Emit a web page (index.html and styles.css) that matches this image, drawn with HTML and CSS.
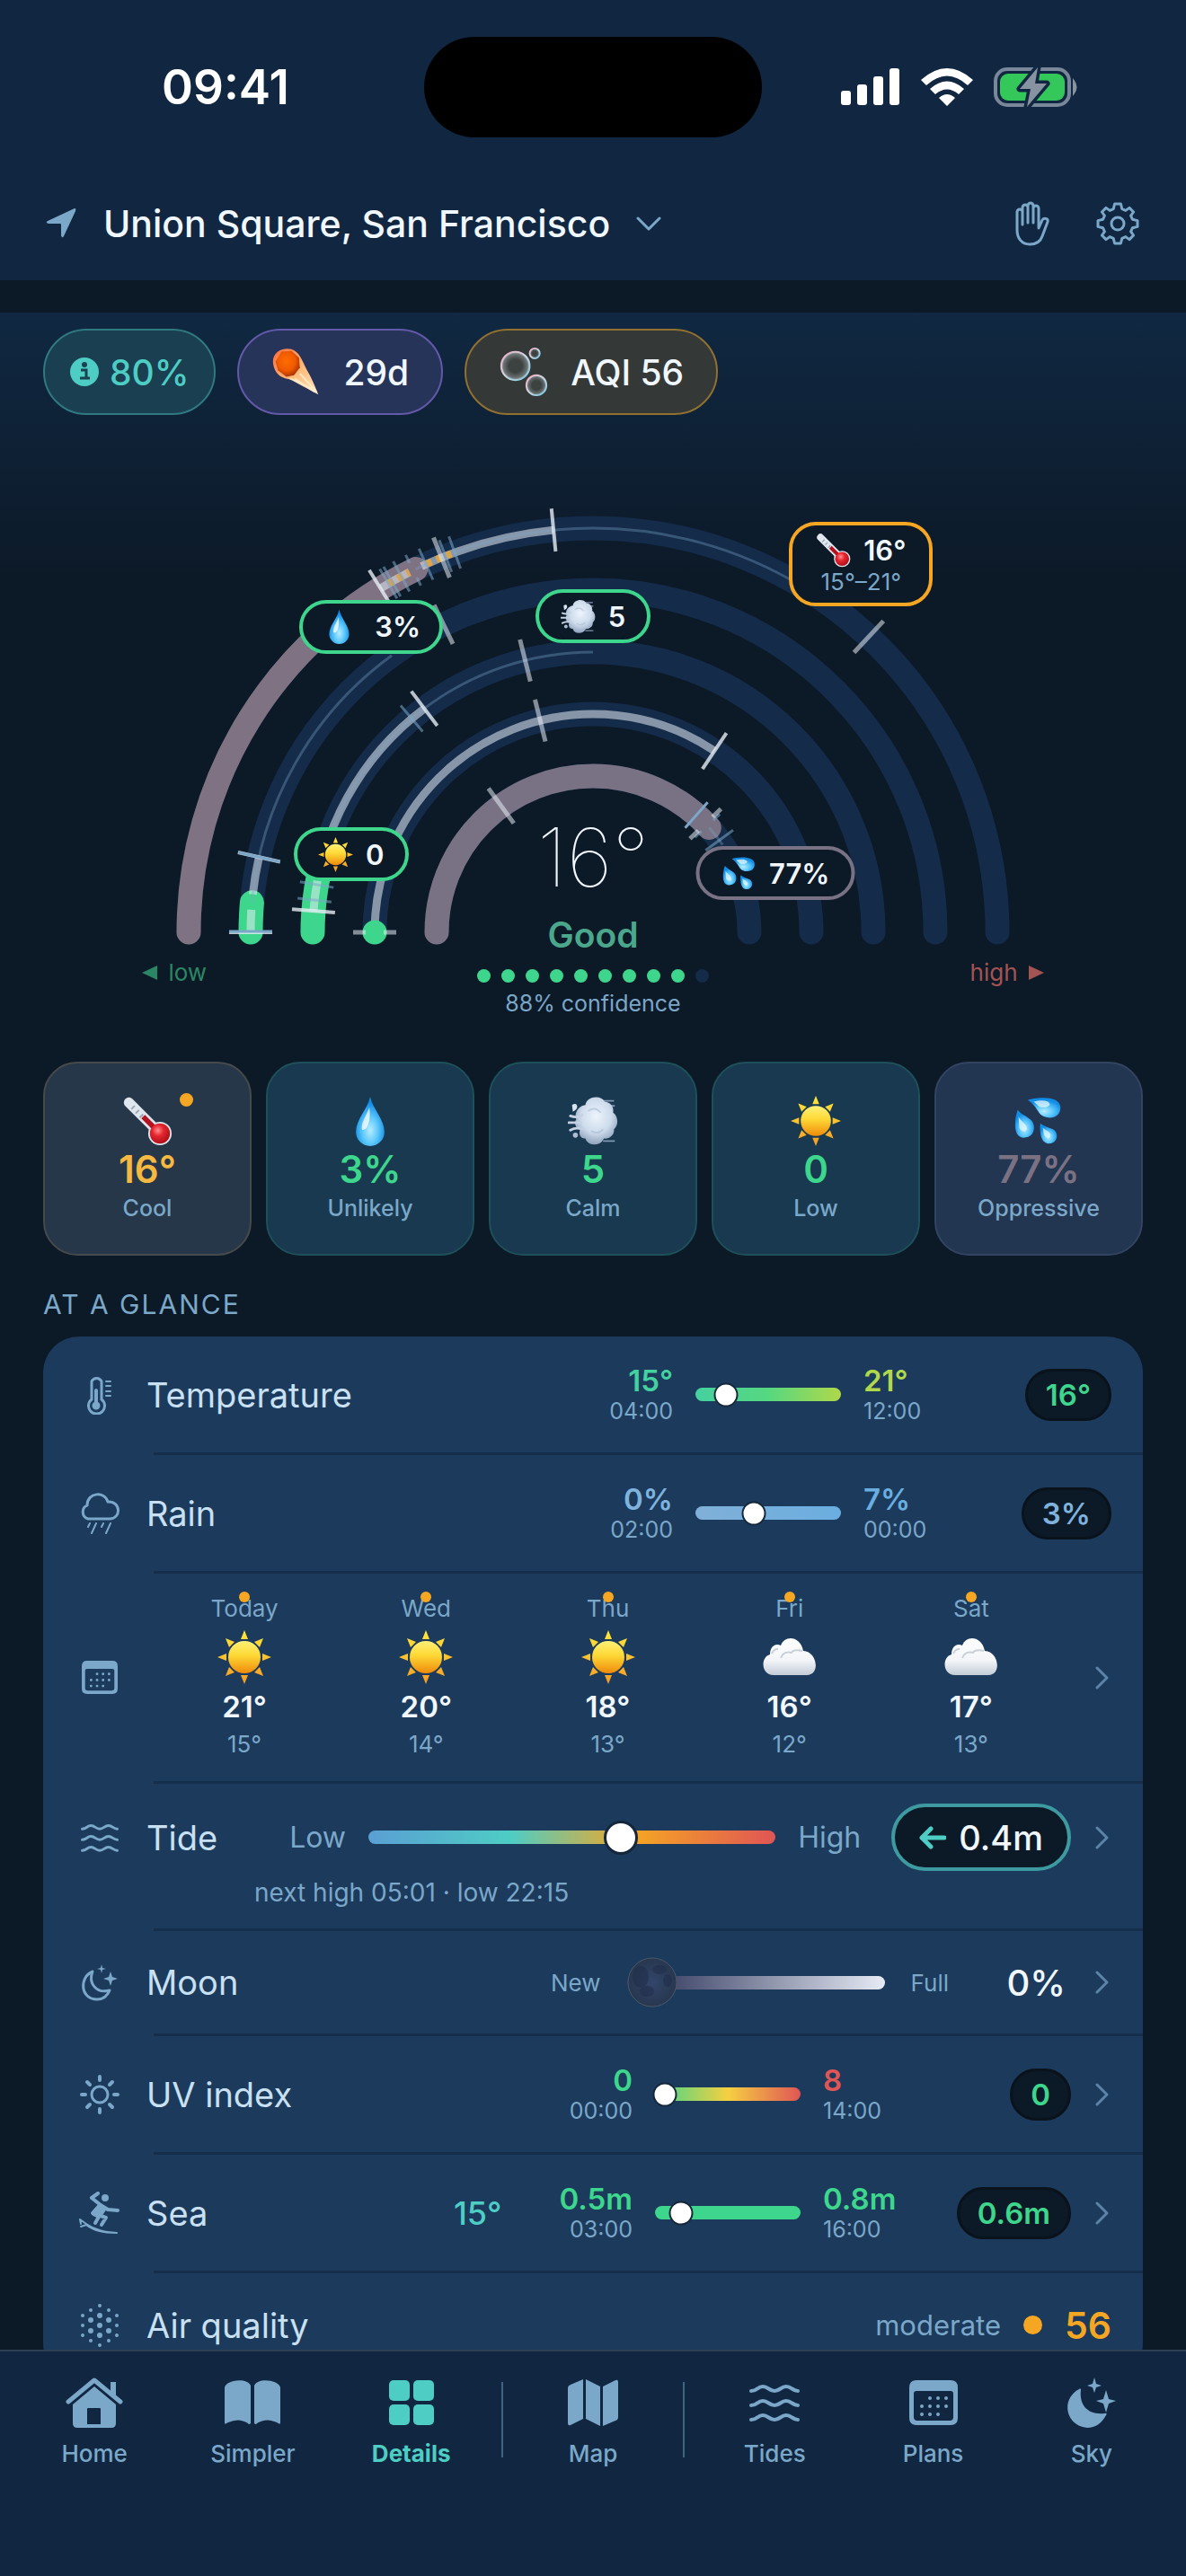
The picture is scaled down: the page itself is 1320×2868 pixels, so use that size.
FILE: index.html
```html
<!DOCTYPE html>
<html lang="en">
<head>
<meta charset="utf-8">
<meta name="viewport" content="width=device-width">
<title>Weather details</title>
<link rel="stylesheet" href="styles.css">
</head>
<body>
<svg class="defs" aria-hidden="true">
  <defs>
    <linearGradient id="g-sun" x1="0" y1="0" x2="0" y2="1"><stop offset="0" stop-color="#fff176"/><stop offset=".45" stop-color="#fdd835"/><stop offset="1" stop-color="#f08a0c"/></linearGradient>
    <linearGradient id="g-ray" gradientUnits="userSpaceOnUse" x1="0" y1="0" x2="0" y2="60"><stop offset="0" stop-color="#ffe93b"/><stop offset="1" stop-color="#f59a23"/></linearGradient>
    <radialGradient id="g-drop" cx=".5" cy=".68" r=".55"><stop offset="0" stop-color="#b8ecff"/><stop offset=".5" stop-color="#5cc8fb"/><stop offset="1" stop-color="#128de6"/></radialGradient>
    <radialGradient id="g-puff" cx=".5" cy=".4" r=".6"><stop offset="0" stop-color="#edf4fd"/><stop offset=".6" stop-color="#cddbeb"/><stop offset="1" stop-color="#8fa3bd"/></radialGradient>
    <linearGradient id="g-cloud" x1="0" y1="0" x2="0" y2="1"><stop offset="0" stop-color="#ffffff"/><stop offset=".6" stop-color="#f3f5f8"/><stop offset="1" stop-color="#c3ccd8"/></linearGradient>
    <radialGradient id="g-bulb" cx=".4" cy=".35" r=".7"><stop offset="0" stop-color="#ff8d8d"/><stop offset=".4" stop-color="#e5262f"/><stop offset="1" stop-color="#a80d18"/></radialGradient>
    <radialGradient id="g-comet" cx=".45" cy=".4" r=".6"><stop offset="0" stop-color="#ff6d00"/><stop offset=".6" stop-color="#f05a00"/><stop offset="1" stop-color="#a73208"/></radialGradient>
    <linearGradient id="g-tail" x1="0" y1="0" x2="1" y2="1"><stop offset="0" stop-color="#ff6a3a"/><stop offset=".5" stop-color="#ffb877"/><stop offset="1" stop-color="#ffe9bd"/></linearGradient>
    <radialGradient id="g-bubble"><stop offset=".45" stop-color="#9aa" stop-opacity=".08"/><stop offset=".85" stop-color="#b4bfc4" stop-opacity=".45"/><stop offset="1" stop-color="#dde6ea" stop-opacity=".9"/></radialGradient>
    <linearGradient id="g-rim" x1="0" y1="0" x2="1" y2="1"><stop offset="0" stop-color="#f7a8c4"/><stop offset=".5" stop-color="#cdd8e2"/><stop offset="1" stop-color="#6fc4e6"/></linearGradient>
    <radialGradient id="g-moon"><stop offset="0" stop-color="#33466b"/><stop offset="1" stop-color="#27374f"/></radialGradient>
  </defs>

  <symbol id="e-sun" viewBox="0 0 60 60">
    <g fill="url(#g-ray)"><path d="M30 0l4 10h-8zM30 60l4-10h-8zM0 30l10-4v8zM60 30l-10-4v8zM9 9l10 4-6 6zM51 9l-10 4 6 6zM9 51l10-4-6-6zM51 51l-10-4 6-6z"/></g>
    <circle cx="30" cy="30" r="18" fill="url(#g-sun)"/>
  </symbol>
  <symbol id="e-drop" viewBox="0 0 60 60">
    <path d="M30 1C33 16 47 28 47 43a17 17 0 0 1-34 0C13 28 27 16 30 1z" fill="url(#g-drop)"/>
    <path d="M29 14c-3 9-9 16-9 25 0 3 5 2 7-3 3-7 3-14 2-22z" fill="#fff" opacity=".75"/>
  </symbol>
  <symbol id="e-sweat" viewBox="0 0 60 60">
    <path d="M17 5c12-4 39-5 39 9 0 16-20 14-25 7C27 14 22 8 17 5z" fill="url(#g-drop)"/>
    <path d="M5 17c-4 12-6 32 7 33 15 0 15-17 8-22C14 24 8 21 5 17z" fill="url(#g-drop)"/>
    <path d="M32 33c-1 8 0 24 10 24 12 0 12-14 5-17-6-2-11-4-15-7z" fill="url(#g-drop)"/>
    <path d="M24 7c8-2 17-2 19 2s-8 6-12 4zM6 25c3 6 10 9 10 14s-8 4-9-1zM35 38c4 4 10 5 9 10s-7 2-8-3z" fill="#e3f7ff" opacity=".75"/>
  </symbol>
  <symbol id="e-wind" viewBox="0 0 60 60">
    <path d="M40 6h15M42 54h14M50 12h6" stroke="#8196b2" stroke-width="2"/>
    <path d="M21 11c1-10 18-13 23-4 8 1 11 7 10 13 6 4 7 15 1 20 1 7-6 12-12 11-4 10-20 9-22 0-8 0-8-8-6-11-6-1-8-8-5-12-3-8 3-16 11-17z" fill="url(#g-puff)"/>
    <path d="M17 23q-6 4-14 1M15 32H1M17 40q-7-3-14 1" stroke="#c3d1e2" stroke-width="3" stroke-linecap="round" fill="none"/>
    <path d="M5 11q5-3 6 1t-5 7" fill="#d8e4f2"/><circle cx="9" cy="47" r="3" fill="#aebfd4"/>
    <path d="M24 18q9-6 15 2M28 42q8 5 14-2" stroke="#9fb2cb" stroke-width="2" fill="none" opacity=".5"/>
  </symbol>
  <symbol id="e-temp" viewBox="0 0 60 60">
    <path d="M8 8L43 43" stroke="#dfe6ee" stroke-width="12" stroke-linecap="round"/>
    <circle cx="45" cy="45" r="14" fill="#dfe6ee"/>
    <path d="M25 25L44 44" stroke="#b3121e" stroke-width="6"/>
    <circle cx="45" cy="45" r="12" fill="url(#g-bulb)"/>
    <path d="M11 16l4-4M16 21l4-4M21 26l4-4" stroke="#9aa5b1" stroke-width="2"/>
  </symbol>
  <symbol id="e-cloud" viewBox="0 0 60 60">
    <path d="M12 50C-2 50-3 30 8 27c0-9 6-13 12-10C24 5 42 6 45 23c15 0 20 27 4 27z" fill="url(#g-cloud)"/>
    <path d="M20 31q3-8 12-6q2-4 12-2M10 26q2-5 7-5" stroke="#c9d0da" stroke-width="2" fill="none"/>
  </symbol>
  <symbol id="e-comet" viewBox="0 0 60 60">
    <path d="M3 24C-2 8 12 0 24 3c10 4 12 12 18 24 6 10 10 20 14 30C44 50 32 45 24 39 13 38 6 34 3 24z" fill="url(#g-tail)"/>
    <path d="M28 38l24 16M34 32l20 22M22 38l26 12" stroke="#fff3d6" stroke-width="2" opacity=".8"/>
    <path d="M12 6l12-1 9 8 1 12-7 9-9 2-10-8-3-10z" fill="url(#g-comet)"/>
  </symbol>
  <symbol id="e-bubbles" viewBox="0 0 60 60">
    <g fill="url(#g-bubble)" stroke="url(#g-rim)" stroke-width="2"><circle cx="20" cy="23" r="17"/><circle cx="45" cy="46" r="12"/><circle cx="43" cy="8" r="6"/></g>
  </symbol>

  <symbol id="i-waves" viewBox="0 0 56 42"><g fill="none" stroke="currentColor" stroke-width="4" stroke-linecap="round"><path d="M2 8c7 0 7-5 13-5s7 5 13 5 7-5 13-5 7 5 13 5"/><path d="M2 24c7 0 7-5 13-5s7 5 13 5 7-5 13-5 7 5 13 5"/><path d="M2 40c7 0 7-5 13-5s7 5 13 5 7-5 13-5 7 5 13 5"/></g></symbol>
  <symbol id="i-cal" viewBox="0 0 54 50">
    <path fill-rule="evenodd" fill="currentColor" d="M8 0h38q8 0 8 8v34q0 8-8 8H8q-8 0-8-8V8q0-8 8-8zM8 12q-3 0-3 3v26q0 4 4 4h36q4 0 4-4V15q0-3-3-3z"/>
    <path stroke="currentColor" stroke-width="4" stroke-linecap="round" stroke-dasharray="0 9" d="M23 20h20M14 29h30M14 38h20"/>
  </symbol>
  <symbol id="i-chev" viewBox="0 0 16 28"><path d="M2 3l11 11L2 25" fill="none" stroke="currentColor" stroke-width="3" stroke-linecap="round" stroke-linejoin="round"/></symbol>
</svg>

<header class="top">
  <div class="status">
    <span class="time">09:41</span>
    <span class="island"></span>
    <span class="signals">
      <svg width="66" height="42" viewBox="0 0 66 42" fill="#fff"><rect y="25" width="11" height="16" rx="3"/><rect x="18" y="18" width="11" height="23" rx="3"/><rect x="36" y="9" width="11" height="32" rx="3"/><rect x="54" width="11" height="41" rx="3"/></svg>
      <svg width="58" height="42" viewBox="0 0 58 42" fill="#fff"><path d="M0 13Q29-13 58 13L52 19Q29-2 6 19zM10 23Q29 6 48 23L42 29Q29 18 16 29zM20 33Q29 25 38 33L29 42z"/></svg>
      <svg width="94" height="46" viewBox="0 0 94 46"><rect x="2" y="3" width="82" height="40" rx="13" fill="none" stroke="#78879a" stroke-width="4"/><rect x="7" y="8" width="72" height="30" rx="9" fill="#34c759"/><path d="M89 16q5 7 0 14z" fill="#8893a1" stroke="#8893a1" stroke-width="2"/><path d="M49 1L29 25h12L37 45 59 19H46z" fill="#8893a1" stroke="#112741" stroke-width="7" paint-order="stroke" stroke-linejoin="round"/></svg>
    </span>
  </div>
  <div class="locbar">
    <button class="place" type="button">
      <svg width="36" height="36" viewBox="0 0 36 36" fill="#7ba7c8"><path d="M33 1q2 0 1 3L21 32q-2 3-3-1V19q0-1-1-1H4q-4-1-1-3z"/></svg>
      <span>Union Square, San Francisco</span>
      <svg width="28" height="18" viewBox="0 0 28 18" fill="none" stroke="#7ba7c8" stroke-width="3" stroke-linecap="round" stroke-linejoin="round"><path d="M2 3l12 12L26 3"/></svg>
    </button>
    <button class="iconbtn" type="button" aria-label="Touch help">
      <svg width="38" height="50" viewBox="0 0 38 50" fill="none" stroke="#7ba7c8" stroke-width="3" stroke-linecap="round" stroke-linejoin="round"><path d="M8 26V12a3 3 0 0 0-6 0v20c0 9 5 16 14 16 8 0 12-3 14-9l6-16c1-4-4-5-6-2l-4 9V8a3 3 0 0 0-6 0v16M8 12V7a3 3 0 0 1 6 0v17M14 7V5a3 3 0 0 1 6 0v4"/></svg>
    </button>
    <button class="iconbtn" type="button" aria-label="Settings">
      <svg width="48" height="48" viewBox="-24 -24 48 48" fill="none" stroke="#7ba7c8" stroke-width="3" stroke-linejoin="round"><path d="M-3.4-22H3.4L4.8-16.4 8.8-14.6 13-17.6 17.6-13 14.6-8.8 16.4-4.8 22-3.4V3.4L16.4 4.8 14.6 8.8 17.6 13 13 17.6 8.8 14.6 4.8 16.4 3.4 22H-3.4L-4.8 16.4-8.8 14.6-13 17.6-17.6 13-14.6 8.8-16.4 4.8-22 3.4V-3.4L-16.4-4.8-14.6-8.8-17.6-13-13-17.6-8.8-14.6-4.8-16.4z"/><circle r="7"/></svg>
    </button>
  </div>
</header>

<main>
  <section class="hero">
    <div class="chips">
      <button class="chip chip-info" type="button"><svg width="32" height="32" viewBox="0 0 32 32"><circle cx="16" cy="16" r="16" fill="#4ecdc4"/><path d="M12 14h6v9M11 23h11" stroke="#1a4152" stroke-width="3" fill="none"/><circle cx="16" cy="8" r="3" fill="#1a4152"/></svg>80%</button>
      <button class="chip chip-comet" type="button"><svg class="emoji"><use href="#e-comet"/></svg>29d</button>
      <button class="chip chip-aqi" type="button"><svg class="emoji"><use href="#e-bubbles"/></svg>AQI 56</button>
    </div>

    <div class="gauge">
      <svg viewBox="0 0 1320 680" role="img" aria-label="Conditions gauge">
        <g transform="translate(660 558) rotate(180)" fill="none">
          <g stroke="#142b49" stroke-width="27" stroke-linecap="round" stroke-dasharray="180 360">
            <circle r="450" pathLength="360"/><circle r="381" pathLength="360"/><circle r="312" pathLength="360"/><circle r="243" pathLength="360"/><circle r="174" pathLength="360"/>
          </g>
          <g stroke-width="27" stroke-linecap="round">
            <circle r="450" pathLength="360" stroke="#7f7282" stroke-dasharray="64 360"/>
            <circle r="381" pathLength="360" stroke="#3dd68c" stroke-dasharray="5 360"/>
            <circle r="312" pathLength="360" stroke="#3dd68c" stroke-dasharray="15 360"/>
            <circle r="174" pathLength="360" stroke="#787284" stroke-dasharray="138 360"/>
          </g>
          <!-- day ranges -->
          <g stroke="#e6edf5" stroke-opacity=".55" stroke-width="9">
            <circle r="450" pathLength="360" stroke-dasharray="4.7 360" stroke-dashoffset="-58.3"/>
            <circle r="450" pathLength="360" stroke-dasharray="19.5 360" stroke-dashoffset="-64.9"/>
            <circle r="381" pathLength="360" stroke-dasharray="3.8 360"/>
            <circle r="381" pathLength="360" stroke-dasharray="6.3 360" stroke-dashoffset="-6.4"/>
            <circle r="312" pathLength="360" stroke-dasharray="48.6 360" stroke-dashoffset="-4.4"/>
            <circle r="243" pathLength="360" stroke-dasharray="123.8 360"/>
          </g>
          <circle r="243" pathLength="360" stroke="#3dd68c" stroke-width="27" stroke-linecap="round" stroke-dasharray="0 360"/>
          <g stroke="#7ba7c8" stroke-opacity=".35" stroke-width="3">
            <circle r="450" pathLength="360" stroke-dasharray="57 360" stroke-dashoffset="-64"/>
            <circle r="381" pathLength="360" stroke-dasharray="49 360" stroke-dashoffset="-5"/>
            <circle r="312" pathLength="360" stroke-dasharray="75 360" stroke-dashoffset="-15"/>
            <circle r="174" pathLength="360" stroke-dasharray="8 360" stroke-dashoffset="-138"/>
          </g>
          <g stroke="#dba34a" stroke-width="8">
            <circle r="450" pathLength="360" stroke-dasharray=".8 .7 .8 .7 .4 360" stroke-dashoffset="-59.6"/>
            <circle r="450" pathLength="360" stroke-dasharray=".8 .7 .8 .7 .8 360" stroke-dashoffset="-65.7"/>
          </g>
          <!-- hourly samples -->
          <g stroke="#7ba7c8" stroke-opacity=".55" stroke-width="3">
            <path d="M431 0h38" transform="rotate(59.6)"/><path d="M431 0h38" transform="rotate(60.2)"/><path d="M431 0h38" transform="rotate(61.7)"/>
            <path d="M431 0h10M459 0h10" transform="rotate(63.6)"/><path d="M431 0h38" transform="rotate(65.6)"/><path d="M431 0h38" transform="rotate(68.6)"/><path d="M431 0h38" transform="rotate(70)"/>
            <path d="M293 0h38" transform="rotate(6.6)"/><path d="M293 0h38" transform="rotate(9.8)"/><path d="M293 0h38" transform="rotate(49.7)"/>
            <path d="M155 0h38" transform="rotate(131.4)" stroke-opacity="1"/><path d="M155 0h10M183 0h10" transform="rotate(137)"/><path d="M155 0h38" transform="rotate(143.9)"/>
          </g>
          <!-- averages -->
          <g stroke="#e6edf5" stroke-opacity=".55" stroke-width="5">
            <path d="M426 0h48" transform="rotate(68)"/><path d="M426 0h48" transform="rotate(133)"/><path d="M357 0h48" transform="rotate(64.1)"/><path d="M288 0h48" transform="rotate(76)"/><path d="M219 0h48" transform="rotate(76)"/><path d="M150 0h48" transform="rotate(54)"/><path d="M150 0h13M185 0h13" transform="rotate(136)"/>
            <path d="M219 0h14M253 0h14"/>
          </g>
          <!-- minimum and maximum -->
          <g stroke="#e6edf5" stroke-opacity=".8" stroke-width="4">
            <path d="M426 0h48" transform="rotate(58.3)"/><path d="M426 0h48" transform="rotate(84.4)"/><path d="M357 0h48"/><path d="M357 0h48" transform="rotate(12.7)"/><path d="M288 0h48" transform="rotate(4.4)"/><path d="M288 0h48" transform="rotate(53)"/><path d="M219 0h48" transform="rotate(123.8)"/>
          </g>
          <path d="M357 1h48" stroke="#7ba7c8" stroke-width="3"/><path d="M357 0h48" stroke="#7ba7c8" stroke-width="3" transform="rotate(12.7)"/>
        </g>
      </svg>
      <span class="badge b-temp"><span class="badge-line"><svg class="emoji"><use href="#e-temp"/></svg>16°</span><small>15°–21°</small></span>
      <span class="badge b-rain"><svg class="emoji"><use href="#e-drop"/></svg>3%</span>
      <span class="badge b-wind"><svg class="emoji"><use href="#e-wind"/></svg>5</span>
      <span class="badge b-uv"><svg class="emoji"><use href="#e-sun"/></svg>0</span>
      <span class="badge b-hum"><svg class="emoji"><use href="#e-sweat"/></svg>77%</span>
      <div class="reading">
        <span class="now">16°</span>
        <span class="verdict">Good</span>
        <span class="dots"><i></i><i></i><i></i><i></i><i></i><i></i><i></i><i></i><i></i><i class="off"></i></span>
        <span class="conf">88% confidence</span>
      </div>
      <span class="end low"><svg width="17" height="16" viewBox="0 0 17 16"><path d="M0 8L17 0v16z" fill="currentColor"/></svg>low</span>
      <span class="end high">high<svg width="17" height="16" viewBox="0 0 17 16"><path d="M17 8L0 0v16z" fill="currentColor"/></svg></span>
    </div>
  </section>

  <section class="tiles">
    <button class="tile t-cool" type="button"><span class="face"><svg class="emoji"><use href="#e-temp"/></svg><i class="alert"></i></span><b>16°</b><span>Cool</span></button>
    <button class="tile" type="button"><span class="face"><svg class="emoji"><use href="#e-drop"/></svg></span><b>3%</b><span>Unlikely</span></button>
    <button class="tile" type="button"><span class="face"><svg class="emoji"><use href="#e-wind"/></svg></span><b>5</b><span>Calm</span></button>
    <button class="tile" type="button"><span class="face"><svg class="emoji"><use href="#e-sun"/></svg></span><b>0</b><span>Low</span></button>
    <button class="tile t-hum" type="button"><span class="face"><svg class="emoji"><use href="#e-sweat"/></svg></span><b>77%</b><span>Oppressive</span></button>
  </section>

  <h2>AT A GLANCE</h2>
  <section class="card">
    <div class="row">
      <span class="ico"><svg width="28" height="44" viewBox="0 0 28 44" fill="none" stroke="currentColor" stroke-width="3" stroke-linecap="round"><path d="M5 27V7a6 6 0 0 1 11 0v20a9 9 0 1 1-11 0z"/><path d="M10 17v17" stroke-width="4"/><circle cx="10" cy="34" r="3" fill="currentColor"/><path d="M21 7h5M21 12h5M21 18h5M21 23h5" stroke-width="2"/></svg></span>
      <span class="name">Temperature</span>
      <span class="end-val right"><b class="c-mint">15°</b><small>04:00</small></span>
      <span class="bar bar-temp"><i class="knob" style="left:21%"></i></span>
      <span class="end-val wide"><b class="c-lime">21°</b><small>12:00</small></span>
      <span class="slot"><span class="pill c-green">16°</span></span>
    </div>
    <div class="row">
      <span class="ico"><svg width="46" height="46" viewBox="0 0 46 46" fill="none" stroke="currentColor" stroke-width="3" stroke-linecap="round"><path d="M10 29A8 8 0 0 1 9 14C9-1 29-2 32 10c15-1 15 19 2 19z"/><path d="M12 34l-2 4M19 34l-5 11M27 34l-2 4M35 34l-5 11" stroke-width="2"/></svg></span>
      <span class="name">Rain</span>
      <span class="end-val right"><b class="c-sky">0%</b><small>02:00</small></span>
      <span class="bar bar-rain"><i class="knob" style="left:40%"></i></span>
      <span class="end-val wide"><b class="c-blue">7%</b><small>00:00</small></span>
      <span class="slot"><span class="pill c-sky">3%</span></span>
    </div>
    <a class="row days" href="#days">
      <span class="ico"><svg width="40" height="37"><use href="#i-cal"/></svg></span>
      <span class="day"><span>Today</span><svg class="emoji"><use href="#e-sun"/></svg><b>21°</b><small>15°</small></span>
      <span class="day"><span>Wed</span><svg class="emoji"><use href="#e-sun"/></svg><b>20°</b><small>14°</small></span>
      <span class="day"><span>Thu</span><svg class="emoji"><use href="#e-sun"/></svg><b>18°</b><small>13°</small></span>
      <span class="day"><span>Fri</span><svg class="emoji"><use href="#e-cloud"/></svg><b>16°</b><small>12°</small></span>
      <span class="day"><span>Sat</span><svg class="emoji"><use href="#e-cloud"/></svg><b>17°</b><small>13°</small></span>
      <svg class="chev"><use href="#i-chev"/></svg>
    </a>
    <a class="row tide" href="#tides">
      <span class="tide-main">
        <span class="ico"><svg width="42" height="32"><use href="#i-waves"/></svg></span>
        <span class="name">Tide</span>
        <span class="cap-lg">Low</span>
        <span class="bar bar-tide"><i class="knob big" style="left:62%"></i></span>
        <span class="cap-lg">High</span>
        <span class="pill tide-pill"><svg width="30" height="26" viewBox="0 0 30 26" fill="none" stroke="#4ecdc4" stroke-width="5" stroke-linecap="round" stroke-linejoin="round"><path d="M28 13H3M13 3L3 13l10 10"/></svg>0.4m</span>
        <svg class="chev"><use href="#i-chev"/></svg>
      </span>
      <span class="next">next high 05:01 · low 22:15</span>
    </a>
    <a class="row moon" href="#moon">
      <span class="ico"><svg width="42" height="42" viewBox="0 0 42 42" fill="none" stroke="currentColor" stroke-width="3" stroke-linejoin="round"><path d="M13 9C-2 15-1 40 18 40c8 0 12-5 14-10C17 34 8 22 13 9z"/><path d="M23 1l1 4 4 1-4 1-1 4-1-4-4-1 4-1zM33 9l2 6 6 2-6 2-2 6-2-6-6-2 6-2z" fill="currentColor" stroke="none"/></svg></span>
      <span class="name">Moon</span>
      <span class="cap">New</span>
      <span class="bar bar-moon"><svg class="disc" viewBox="0 0 56 56"><circle cx="28" cy="28" r="27" fill="url(#g-moon)" stroke="#4d5868"/><g fill="#1f2d4a" opacity=".55"><ellipse cx="15" cy="22" rx="9" ry="12"/><ellipse cx="36" cy="14" rx="8" ry="5"/><ellipse cx="45" cy="26" rx="5" ry="7"/><ellipse cx="22" cy="38" rx="8" ry="6"/></g></svg></span>
      <span class="cap">Full</span>
      <span class="phase">0%</span>
      <svg class="chev"><use href="#i-chev"/></svg>
    </a>
    <a class="row" href="#uv">
      <span class="ico"><svg width="44" height="44" viewBox="0 0 44 44" fill="none" stroke="currentColor" stroke-width="4" stroke-linecap="round"><circle cx="22" cy="22" r="9" stroke-width="3"/><path d="M22 2v4M22 38v4M2 22h4M38 22h4M8 8l3 3M33 33l3 3M8 36l3-3M33 11l3-3"/></svg></span>
      <span class="name">UV index</span>
      <span class="end-val right"><b class="c-green">0</b><small>00:00</small></span>
      <span class="bar bar-uv"><i class="knob" style="left:7%"></i></span>
      <span class="end-val wide"><b class="c-red">8</b><small>14:00</small></span>
      <span class="slot"><span class="pill c-green">0</span></span>
      <svg class="chev"><use href="#i-chev"/></svg>
    </a>
    <a class="row" href="#sea">
      <span class="ico"><svg width="46" height="48" viewBox="0 0 46 48" fill="none" stroke="currentColor" stroke-width="4" stroke-linecap="round" stroke-linejoin="round"><circle cx="29" cy="7" r="4" fill="currentColor" stroke="none"/><path d="M21 2l-7 5 10 8 8 5 11 1"/><path d="M15 24l8-9 5 5-5 7z" fill="currentColor"/><path d="M16 25l6 3-4 7M21 26l9 3-5 8"/><path d="M2 36l-1-5 7 5c10 7 20 9 34 10-16 0-28-4-34-9l-6 2" stroke-width="2"/></svg></span>
      <span class="name">Sea</span>
      <span class="water">15°</span>
      <span class="end-val right"><b class="c-green">0.5m</b><small>03:00</small></span>
      <span class="bar bar-sea"><i class="knob" style="left:18%"></i></span>
      <span class="end-val wide"><b class="c-green">0.8m</b><small>16:00</small></span>
      <span class="slot"><span class="pill c-green">0.6m</span></span>
      <svg class="chev"><use href="#i-chev"/></svg>
    </a>
    <div class="row">
      <span class="ico"><svg width="44" height="48" viewBox="0 0 44 48" fill="none" stroke="currentColor" stroke-linecap="round" stroke-width="4"><path d="M22 2v0M12 7v0M32 7v0M3 13v0M41 13v0M3 24v0M41 24v0M3 35v0M41 35v0M12 41v0M32 41v0M22 46v0"/><path stroke-width="6" d="M22 13v0M12 18v0M32 18v0M12 30v0M32 30v0M22 35v0M22 24v0"/></svg></span>
      <span class="name">Air quality</span>
      <span class="air">moderate</span><i class="air-dot"></i><b class="aqi">56</b>
    </div>
  </section>
</main>

<nav class="tabs">
  <a href="#home"><span class="tab-ico"><svg width="64" height="56" viewBox="0 0 64 56"><path d="M50 5h6v18l-6-5z" fill="currentColor"/><path d="M3 27L32 3l29 24" fill="none" stroke="currentColor" stroke-width="5" stroke-linecap="round" stroke-linejoin="round"/><path fill="currentColor" fill-rule="evenodd" d="M8 30l24-20 24 20v21q0 5-5 5H13q-5 0-5-5zM25 34q-1 0-1 1v17h15V35q0-1-1-1z" stroke="#112741" stroke-width="2" paint-order="stroke"/></svg></span>Home</a>
  <a href="#simpler"><span class="tab-ico"><svg width="62" height="50" viewBox="0 0 62 50" fill="currentColor"><path d="M0 8C2-1 26-3 29 6v42q-2 2-3 0-11-7-24 0-2 2-2-1zM62 8C60-1 36-3 33 6v42q2 2 3 0 11-7 24 0 2 2 2-1z"/></svg></span>Simpler</a>
  <a class="on" href="#details" aria-current="page"><span class="tab-ico"><svg width="50" height="50" viewBox="0 0 50 50" fill="currentColor"><rect width="23" height="23" rx="5"/><rect x="27" width="23" height="23" rx="5"/><rect y="27" width="23" height="23" rx="5"/><rect x="27" y="27" width="23" height="23" rx="5"/></svg></span>Details</a>
  <span class="sep"></span>
  <a href="#map"><span class="tab-ico"><svg width="56" height="52" viewBox="0 0 56 52" fill="currentColor"><path d="M0 10q0-3 3-4L17 0v44L3 51q-3 1-3-2zM20 0l16 8v44l-16-8zM39 8l14-7q3-1 3 2v39q0 3-3 4l-14 6z"/></svg></span>Map</a>
  <span class="sep"></span>
  <a href="#tides"><span class="tab-ico"><svg width="56" height="42"><use href="#i-waves"/></svg></span>Tides</a>
  <a href="#plans"><span class="tab-ico"><svg width="54" height="50"><use href="#i-cal"/></svg></span>Plans</a>
  <a href="#sky"><span class="tab-ico"><svg width="54" height="56" viewBox="0 0 54 56" fill="currentColor"><path d="M13 13q2-2 2 1C13 30 22 42 41 40q4-1 2 2C38 51 31 56 22 56-2 54-8 24 13 13z"/><path d="M30 0l2 7 6 2-6 2-2 6-2-6-6-2 6-2zM43 14l3 10 8 2-8 3-3 10-3-10-8-3 8-2z"/></svg></span>Sky</a>
</nav>
</body>
</html>
```
FILE: styles.css
```css
* { box-sizing: border-box; }
body {
  margin: 0;
  height: 100vh;
  display: flex;
  flex-direction: column;
  background: #0c1927;
  color: #f0f7ff;
  font-family: Inter, "Liberation Sans", sans-serif;
}
button { font: inherit; color: inherit; background: none; border: 0; padding: 0; margin: 0; }
a { color: inherit; text-decoration: none; }
svg { display: block; flex: none; }
b { font-weight: 600; }
.defs { position: absolute; width: 0; height: 0; }

/* Header */
.top { flex: none; background: #112741; padding-bottom: 8px; }
.status {
  height: 194px;
  display: grid;
  grid-template-columns: 1fr 376px 1fr;
  align-items: center;
}
.time { font-size: 53px; font-weight: 600; color: #fff; text-align: center; padding-left: 30px; }
.island { height: 112px; border-radius: 56px; background: #000; }
.signals { display: flex; align-items: center; justify-content: flex-end; gap: 23px; padding-right: 120px; }
.locbar { height: 110px; display: flex; align-items: center; gap: 52px; padding: 0 52px 0 50px; }
.place { display: flex; align-items: center; gap: 29px; font-size: 41px; font-weight: 500; margin-right: auto; }

/* Hero */
main { flex: 1; min-height: 0; overflow-y: auto; scrollbar-width: none; }
.hero { margin-top: 36px; padding-top: 18px; background: linear-gradient(#102842, #0c1927 300px); }
.chips { display: flex; gap: 24px; padding: 0 48px; }
.chip {
  height: 96px;
  border: 2px solid;
  border-radius: 48px;
  display: flex;
  align-items: center;
  gap: 24px;
  padding: 0 36px;
  font-size: 39px;
  font-weight: 500;
}
.chip .emoji { width: 56px; height: 56px; }
.chip-info { gap: 12px; padding: 0 28px; background: #1a3f51; border-color: #2f7a80; color: #4ecdc4; }
.chip-comet { background: #27345a; border-color: #6459a8; }
.chip-aqi { background: #343937; border-color: #92702f; }

/* Gauge */
.gauge { position: relative; margin-top: 18px; }
.gauge > svg { width: 100%; height: auto; }
.badge {
  position: absolute;
  transform: translate(-50%, -50%);
  height: 60px;
  display: flex;
  align-items: center;
  justify-content: center;
  gap: 20px;
  border: 4px solid #3dd68c;
  border-radius: 30px;
  background: #0c1927;
  font-size: 31px;
  font-weight: 600;
}
.badge .emoji { width: 39px; height: 39px; }
.badge small { font-size: 26px; font-weight: 400; line-height: 32px; color: #7ba7c8; }
.badge-line { display: flex; align-items: center; gap: 14px; }
.b-temp { left: 72.6%; top: 21.8%; width: 160px; height: 94px; flex-direction: column; gap: 0; border-color: #f5a623; }
.b-rain { left: 31.3%; top: 32%; width: 160px; }
.b-wind { left: 50%; top: 30.3%; width: 128px; gap: 14px; }
.b-uv { left: 29.6%; top: 69.3%; width: 128px; gap: 14px; }
.b-hum { left: 65.4%; top: 72.4%; width: 177px; gap: 14px; border-color: #787284; }
.reading {
  position: absolute;
  left: 50%;
  bottom: 28px;
  transform: translateX(-50%);
  display: flex;
  flex-direction: column;
  align-items: center;
}
.now { font-size: 90px; font-weight: 100; line-height: 100px; }
.verdict { margin-top: 12px; font-size: 39px; font-weight: 600; line-height: 48px; color: #4ba78b; }
.dots { display: flex; gap: 12px; margin-top: 14px; }
.dots i { width: 15px; height: 15px; border-radius: 50%; background: #3dd68c; }
.dots .off { background: #142b49; }
.conf { margin-top: 8px; font-size: 25px; line-height: 30px; color: #7ba7c8; }
.end { position: absolute; bottom: 60px; display: flex; align-items: center; gap: 12px; font-size: 26px; line-height: 34px; }
.low { left: 12%; color: #2b8763; }
.high { right: 12%; color: #a35452; }

/* Tiles */
.tiles { display: grid; grid-template-columns: repeat(5, 1fr); gap: 16px; padding: 0 48px; margin-top: 22px; }
.tile {
  height: 216px;
  border: 2px solid #1e5059;
  border-radius: 38px;
  background: #18394f;
  display: flex;
  flex-direction: column;
  align-items: center;
  padding-top: 36px;
}
.tile .emoji { width: 56px; height: 56px; }
.face { position: relative; }
.alert { position: absolute; right: -23px; top: -3px; width: 15px; height: 15px; border-radius: 50%; background: #f5a623; }
.tile b { font-size: 42px; line-height: 52px; color: #3dd68c; }
.tile span:last-child { font-size: 25px; font-weight: 500; line-height: 34px; color: #7ba7c8; }
.t-cool { background: #253748; border-color: #474a4b; }
.t-cool b { color: #f5b942; }
.t-hum { background: #223551; border-color: #334461; }
.t-hum b { color: #7a7182; }

h2 { margin: 36px 48px 18px; font-size: 30px; font-weight: 400; line-height: 36px; letter-spacing: 2px; color: #7ba7c8; }

/* At a glance */
.card { margin: 0 48px; border-radius: 40px; background: #1b3a5c; overflow: hidden; }
.row { position: relative; min-height: 132px; padding: 0 35px 3px; display: flex; align-items: center; }
.row::after { content: ""; position: absolute; left: 123px; right: 0; bottom: 0; height: 3px; background: #152e4b; }
.row:last-child::after { display: none; }
.row:last-child { min-height: 118px; }
.ico { flex: none; width: 56px; display: flex; justify-content: center; color: #7ba7c8; }
.name { margin-left: 24px; font-size: 38px; color: #c9e0f2; white-space: nowrap; }
.end-val { display: flex; flex-direction: column; white-space: nowrap; }
.end-val b { font-size: 33px; line-height: 36px; }
.end-val small { font-size: 25px; line-height: 32px; color: #7ba7c8; }
.right { margin-left: auto; align-items: flex-end; }
.wide { width: 130px; }
.slot { width: 146px; display: flex; justify-content: flex-end; }
.bar { position: relative; flex: none; width: 162px; height: 15px; margin: 0 25px; border-radius: 8px; }
.knob { position: absolute; top: 50%; width: 27px; height: 27px; transform: translate(-50%, -50%); border: 2px solid #14273b; border-radius: 50%; background: #fff; }
.knob.big { width: 38px; height: 38px; border-width: 3px; }
.bar-temp { background: linear-gradient(90deg, #45d0a0, #56d880 50%, #b0d84a); }
.bar-rain { background: linear-gradient(90deg, #80b0d8, #6aaee0); }
.bar-tide { flex: 1; background: linear-gradient(90deg, #5a9fd4, #4ecdc4 35%, #f5a623 65%, #e05555); }
.bar-moon { width: 287px; margin: 0 29px; background: linear-gradient(90deg, #353c60 10%, #e6ebf5); }
.bar-uv { background: linear-gradient(90deg, #3dd68c, #f5d040 50%, #e05555); }
.bar-sea { background: #3dd68c; }
.pill {
  height: 58px;
  padding: 0 20px;
  border: 3px solid #0a121b;
  border-radius: 29px;
  background: #0c1927;
  display: flex;
  align-items: center;
  font-size: 33px;
  font-weight: 600;
}
.chev { width: 16px; height: 28px; margin-left: 27px; color: #5b84a6; }
.row > .chev, .tide-main > .chev { margin-right: 2px; }
.c-mint { color: #45d0a0; }
.c-green { color: #3dd68c; }
.c-lime { color: #b0d84a; }
.c-sky { color: #7fb2dc; }
.c-blue { color: #6aaee0; }
.c-red { color: #e05555; }

.days { min-height: 234px; }
.day { position: relative; flex: 1; display: flex; flex-direction: column; align-items: center; color: #7ba7c8; }
.day::before { content: ""; position: absolute; top: 0; width: 12px; height: 12px; border-radius: 50%; background: #f5a623; }
.days .ico { margin-right: 32px; }
.day span { font-size: 26px; line-height: 38px; }
.day .emoji { width: 60px; height: 60px; margin: 5px 0 4px; }
.day b { font-size: 33px; line-height: 42px; color: #f0f7ff; }
.day small { font-size: 26px; line-height: 42px; }
.days .chev { margin-left: 37px; }

.tide { min-height: 164px; flex-direction: column; align-items: stretch; padding-top: 22px; }
.tide-main { display: flex; align-items: center; }
.cap-lg { font-size: 32px; color: #7ba7c8; }
.tide .name { margin-right: 80px; }
.tide-pill { height: 75px; margin-left: 34px; padding: 0 27px; gap: 14px; border: 4px solid #3d9aa0; border-radius: 38px; font-size: 38px; font-weight: 500; }
.next { margin-left: 200px; font-size: 28px; line-height: 48px; color: #7ba7c8; }

.moon { min-height: 117px; }
.cap { font-size: 26px; color: #7ba7c8; }
.moon .cap:nth-child(3) { margin-left: auto; }
.disc { position: absolute; left: 0; top: 50%; width: 56px; height: 56px; transform: translateY(-50%); }
.phase { width: 136px; padding-right: 6px; text-align: right; font-size: 40px; font-weight: 500; }

.water { margin-left: auto; font-size: 36px; font-weight: 500; color: #4ecdc4; }
.water + .right { margin-left: 64px; }
.air { margin-left: auto; font-size: 31px; color: #7ba7c8; }
.air-dot { width: 21px; height: 21px; margin: 0 25px; border-radius: 50%; background: #f5a623; }
.aqi { font-size: 41px; color: #f5a623; }

/* Tab bar */
.tabs {
  flex: none;
  height: 252px;
  border-top: 2px solid #2d4053;
  background: #112741;
  padding: 28px 17px 0;
  display: flex;
  color: #7ba7c8;
}
.tabs a { flex: 1; display: flex; flex-direction: column; align-items: center; font-size: 26px; font-weight: 500; line-height: 36px; }
.tab-ico { height: 58px; margin-bottom: 10px; display: flex; align-items: center; }
.tabs .on { color: #4ecdc4; font-weight: 700; }
.sep { width: 2px; height: 84px; margin: 6px 12px 0; background: #3f6482; }
```
